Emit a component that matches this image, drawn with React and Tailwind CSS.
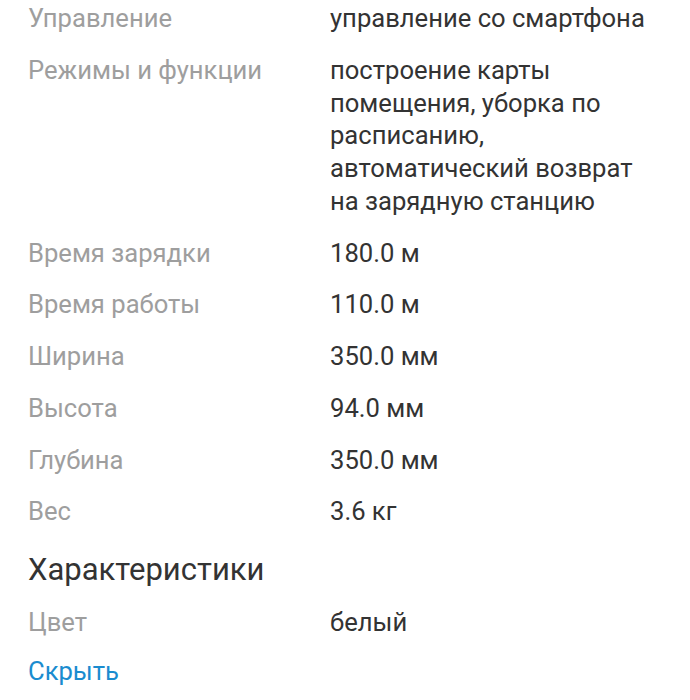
import React from "react";

const specs = [
  { label: "Управление", value: "управление со смартфона" },
  {
    label: "Режимы и функции",
    value:
      "построение карты помещения, уборка по расписанию, автоматический возврат на зарядную станцию",
  },
  { label: "Время зарядки", value: "180.0 м" },
  { label: "Время работы", value: "110.0 м" },
  { label: "Ширина", value: "350.0 мм" },
  { label: "Высота", value: "94.0 мм" },
  { label: "Глубина", value: "350.0 мм" },
  { label: "Вес", value: "3.6 кг" },
];

const Row = ({ label, value }) => (
  <div className="flex">
    <div className="w-[302px] shrink-0 text-[#9e9e9e]">{label}</div>
    <div className="w-[315px] text-[#333333]">{value}</div>
  </div>
);

const App = () => {
  return (
    <div className="bg-white min-h-[700px] px-[28px] pt-[2px] font-['Roboto',sans-serif] text-[25.6px] leading-[32.75px]">
      <div className="flex flex-col gap-[19px]">
        {specs.map((item, index) => (
          <Row key={index} label={item.label} value={item.value} />
        ))}
      </div>

      {/* Характеристики */}
      <h3 className="mt-[22px] text-[31px] leading-[40px] text-[#333333]">Характеристики</h3>
      <div className="mt-[16px]">
        <Row label="Цвет" value="белый" />
      </div>

      <button className="mt-[16px] text-[#1a8ccf] leading-[32.75px]">Скрыть</button>
    </div>
  );
};

export default App;
